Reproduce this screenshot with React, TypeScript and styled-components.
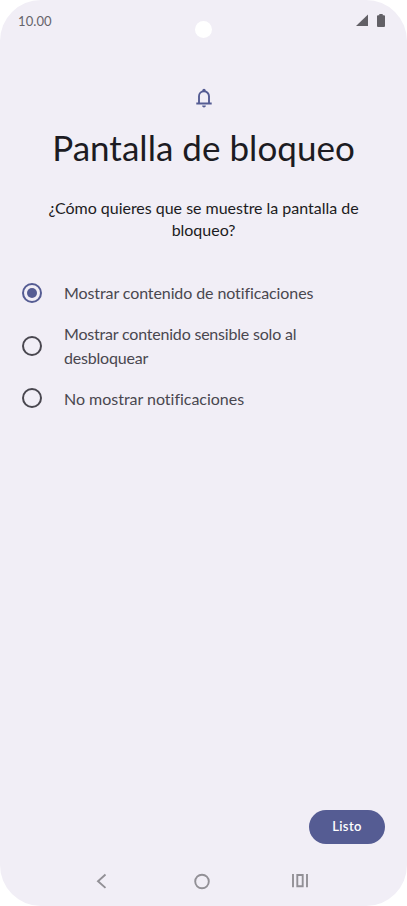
import React, { useState } from "react";
import styled, { createGlobalStyle } from "styled-components";

const Global = createGlobalStyle`
  * { box-sizing: border-box; }
  body {
    margin: 0;
    background: #fff;
    font-family: Lato, "Open Sans", sans-serif;
    font-variant-ligatures: none;
  }
`;

const Screen = styled.main`
  width: 407px;
  height: 906px;
  border-radius: 41px;
  background: #f1eef6;
  display: flex;
  flex-direction: column;
  overflow: hidden;
`;

const StatusBar = styled.header`
  height: 60px;
  padding: 12px 22px 0 18px;
  display: grid;
  grid-template-columns: 177px 17px 1fr;
  align-items: start;
`;

const Clock = styled.span`
  font-size: 13px;
  line-height: 18px;
  letter-spacing: 0.1px;
  color: #66646a;
`;

const Camera = styled.span`
  width: 17px;
  height: 17px;
  margin-top: 8.5px;
  border-radius: 50%;
  background: #fff;
`;

const StatusIcons = styled.div`
  display: flex;
  justify-content: flex-end;
  gap: 9px;
  padding-top: 2px;
`;

const Intro = styled.section`
  display: flex;
  flex-direction: column;
  align-items: center;
  padding-top: 28px;
`;

const Title = styled.h1`
  margin: 16px 0 0;
  font-size: 35px;
  line-height: 46px;
  font-weight: 400;
  letter-spacing: 0.03px;
  color: #1c1b22;
  white-space: nowrap;
`;

const Question = styled.p`
  margin: 27px 0 0;
  font-size: 16px;
  line-height: 22px;
  letter-spacing: -0.02px;
  color: #1c1b22;
  text-align: center;
  white-space: nowrap;
`;

const Options = styled.div`
  display: flex;
  flex-direction: column;
  gap: 17.5px;
  margin-top: 40px;
  padding-left: 22px;
`;

const Option = styled.button`
  display: flex;
  align-items: center;
  gap: 22px;
  padding: 0;
  border: 0;
  background: none;
  text-align: left;
  font: inherit;
  font-variant-ligatures: none;
  cursor: pointer;
`;

const Radio = styled.span<{ $on: boolean }>`
  width: 20px;
  height: 20px;
  flex: none;
  display: grid;
  place-items: center;
  border: 2px solid ${(p) => (p.$on ? "#555c93" : "#49474f")};
  border-radius: 50%;
  &::after {
    content: "";
    width: 10px;
    height: 10px;
    border-radius: 50%;
    background: ${(p) => (p.$on ? "#555c93" : "transparent")};
  }
`;

const Label = styled.span<{ $tracking: number }>`
  font-size: 16px;
  line-height: 23.5px;
  letter-spacing: ${(p) => p.$tracking}px;
  color: #49474f;
  white-space: pre-line;
`;

const Actions = styled.footer`
  display: flex;
  justify-content: flex-end;
  margin-top: auto;
  padding-right: 22px;
`;

const DoneButton = styled.button`
  width: 76px;
  height: 34px;
  padding: 0 0 2px;
  border: 0;
  border-radius: 17px;
  background: #555c93;
  color: #fff;
  font: 600 13px/32px Lato, sans-serif;
  letter-spacing: 0.4px;
`;

const NavBar = styled.nav`
  height: 62px;
  display: grid;
  grid-template-columns: 97.5px 98px 16px;
  align-items: start;
  padding: 29px 0 0 96px;
`;

const options = [
  { text: "Mostrar contenido de notificaciones", tracking: -0.1 },
  { text: "Mostrar contenido sensible solo al\ndesbloquear", tracking: -0.2 },
  { text: "No mostrar notificaciones", tracking: -0.02 },
];

export default function App() {
  const [selected, setSelected] = useState(0);
  return (
    <>
      <Global />
      <Screen>
        <StatusBar>
          <Clock>10.00</Clock>
          <Camera />
          <StatusIcons>
            <svg width="12" height="12" viewBox="0 0 12 12">
              <path d="M0 12 12 .5V12Z" fill="#626066" />
            </svg>
            <svg width="8" height="13" viewBox="0 0 8 13">
              <path d="M2.3 0h3.4v1.2H7a1 1 0 0 1 1 1V12a1 1 0 0 1-1 1H1a1 1 0 0 1-1-1V2.2a1 1 0 0 1 1-1h1.3Z" fill="#626066" />
            </svg>
          </StatusIcons>
        </StatusBar>
        <Intro>
          <svg width="16" height="20" viewBox="0 0 16 20" fill="none">
            <path d="M.3 15.5h15.4" stroke="#555c93" strokeWidth="1.9" />
            <path d="M3 15.5V8.3a5 5 0 0 1 10 0V15.5" stroke="#555c93" strokeWidth="1.9" />
            <path d="M6.3 3.6V2.5a1.7 1.7 0 0 1 3.4 0v1.1ZM6.1 17.5h3.8a1.9 1.9 0 0 1-3.8 0Z" fill="#555c93" />
          </svg>
          <Title>Pantalla de bloqueo</Title>
          <Question>
            ¿Cómo quieres que se muestre la pantalla de
            <br />
            bloqueo?
          </Question>
        </Intro>
        <Options role="radiogroup">
          {options.map((o, i) => (
            <Option key={o.text} role="radio" aria-checked={selected === i} onClick={() => setSelected(i)}>
              <Radio $on={selected === i} />
              <Label $tracking={o.tracking}>{o.text}</Label>
            </Option>
          ))}
        </Options>
        <Actions>
          <DoneButton>Listo</DoneButton>
        </Actions>
        <NavBar>
          <svg width="11" height="16" viewBox="0 0 11 16" fill="none">
            <path d="M9.5 1.5 2 8.2l7.5 6.7" stroke="#929096" strokeWidth="1.9" />
          </svg>
          <svg width="16" height="17" viewBox="0 0 16 17" fill="none">
            <circle cx="8" cy="8.5" r="6.8" stroke="#929096" strokeWidth="1.9" />
          </svg>
          <svg width="16" height="16" viewBox="0 0 16 16" fill="none" stroke="#929096" strokeWidth="1.9">
            <path d="M1 1v13.2M15 1v13.2M5.3 2h5.4v11.3H5.3Z" />
          </svg>
        </NavBar>
      </Screen>
    </>
  );
}
